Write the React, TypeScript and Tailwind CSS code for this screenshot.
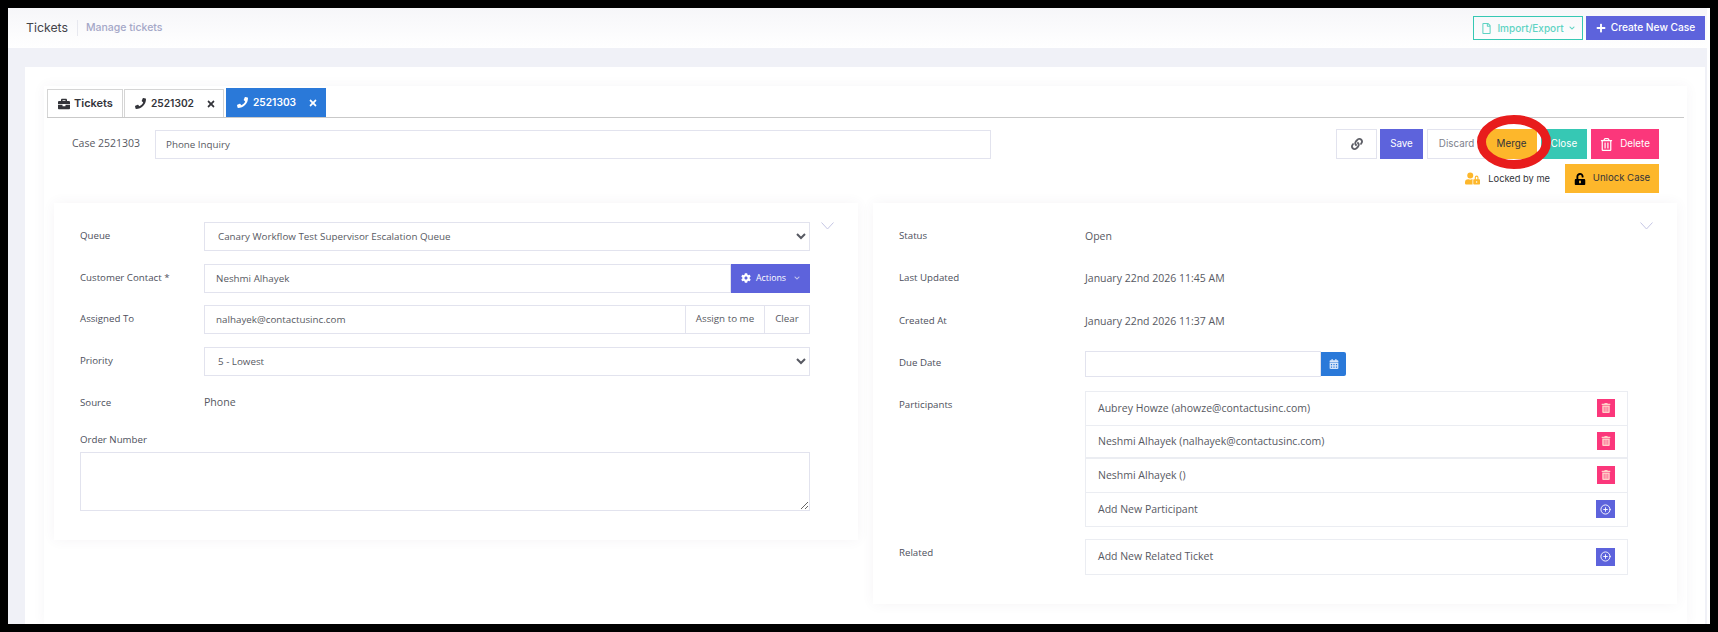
import React from 'react';
import { FaBriefcase, FaPhone, FaTimes, FaLink, FaRegTrashAlt, FaUserLock, FaUnlockAlt, FaCog, FaRegFile, FaPlus, FaCalendarAlt, FaChevronDown, FaTrashAlt } from 'react-icons/fa';
import { FiPlusCircle } from 'react-icons/fi';

const poppins = 'font-["Inter","Liberation_Sans",sans-serif]';

const FieldLabel: React.FC<{ children: React.ReactNode }> = ({ children }) => (
  <span className="text-[9.7px] text-[#4d4f5c]">{children}</span>
);

const Collapse = () => (
  <svg className="absolute right-[24px] top-[19px] w-[13px] h-[8px] text-[#c5c6e4]" viewBox="0 0 13 8" fill="none" stroke="currentColor" strokeWidth="1">
    <path d="M0.5 0.5 L6.5 7 L12.5 0.5" />
  </svg>
);

const ListRow: React.FC<{ text: string; add?: boolean; thick?: boolean }> = ({ text, add, thick }) => (
  <div className={`flex items-center justify-between h-[33.5px] pl-[12px] pr-[12px] text-[10.5px] text-[#575962] ${thick ? 'border-b-2' : 'border-b'} border-[#ebedf2] last:border-b-0`}>
    <span className="pt-px">{text}</span>
    {add ? (
      <button className="flex items-center justify-center w-[19px] h-[18px] bg-[#5d63dc] text-white">
        <FiPlusCircle size={11} />
      </button>
    ) : (
      <button className="flex items-center justify-center w-[18px] h-[18px] bg-[#fb377b] text-[#ffd0c8]">
        <FaTrashAlt size={10} />
      </button>
    )}
  </div>
);

const InfoRow: React.FC<{ label: string; value: string }> = ({ label, value }) => (
  <div className="grid grid-cols-[186px_1fr] items-center h-[42.5px]">
    <FieldLabel>{label}</FieldLabel>
    <span className="pt-px text-[10.5px] text-[#575962]">{value}</span>
  </div>
);

const inputClass = 'h-[29px] bg-white border border-[#e2e3ee] text-[9.8px] text-[#575962] outline-none';

export default function App() {
  return (
    <div className="h-[632px] w-[1718px] bg-black p-2 overflow-hidden font-['Open_Sans',sans-serif]">
      <div className="relative h-[616px] bg-white pr-[3px] overflow-hidden">
        {/* Subheader */}
        <div className="flex items-center justify-between h-10 pl-[18px] pr-[2px] bg-gradient-to-b from-[#f6f6f9] to-white">
          <div className={`flex items-center ${poppins}`}>
            <span className="text-[12.3px] text-[#434349]">Tickets</span>
            <span className="w-px h-4 bg-[#e7e8ef] mx-[9px]" />
            <span className="-ml-px text-[10.5px] font-medium text-[#a5a8c8]">Manage tickets</span>
          </div>
          <div className={`flex items-center gap-[3px] font-medium ${poppins}`}>
            <button className="flex items-center justify-center gap-[5px] w-[110px] h-6 border border-[#36c8b4] text-[10px] text-[#5fd3c3]">
              <FaRegFile size={11} />
              <span>Import/Export</span>
              <FaChevronDown size={6} />
            </button>
            <button className="flex items-center justify-center gap-[5px] w-[119px] h-6 bg-[#5d63dc] text-[10.2px] text-white">
              <FaPlus size={10} />
              <span>Create New Case</span>
            </button>
          </div>
        </div>

        {/* Page */}
        <div className="h-[576px] bg-[#f0f1f7] pt-[19px] pl-[17px] pr-[2px]">
          <div className="h-full bg-white pt-[19px] pl-[19px] pr-[18px]">
            <div className="h-full px-[3px] pt-[3px] shadow-[0_0_12px_rgba(82,63,105,0.05)]">
              {/* Tabs */}
              <div className={`flex items-end h-[29px] gap-px border-b border-[#c9c9c9] font-semibold ${poppins}`}>
                <div className="flex items-center gap-[4px] w-[76px] h-[28px] pl-[10px] border border-b-0 border-[#d5d5d5] text-[11px] text-[#33343a]">
                  <FaBriefcase size={12} />
                  <span>Tickets</span>
                </div>
                <div className="flex items-center gap-[5px] w-[100px] h-[28px] pl-[10px] border border-b-0 border-[#d5d5d5] text-[10.2px] text-[#33343a]">
                  <FaPhone size={11} />
                  <span>2521302</span>
                  <FaTimes size={10} className="ml-[7px]" />
                </div>
                <div className="flex items-center gap-[5px] w-[100px] h-[29px] ml-px pl-[11px] bg-[#2a79d9] text-[10.2px] text-white">
                  <FaPhone size={11} />
                  <span>2521303</span>
                  <FaTimes size={10} className="ml-[7px]" />
                </div>
              </div>

              {/* Case header */}
              <div className="flex items-start justify-between pl-[25px] pr-[25px] pt-[11px]">
                <div className="flex items-center h-[30px]">
                  <span className="w-[83px] text-[10.5px] text-[#575962]">Case 2521303</span>
                  <input readOnly value="Phone Inquiry" className={`w-[836px] ${inputClass} pl-[10px]`} />
                </div>
                <div className="flex flex-col items-end gap-[5px]">
                  <div className={`flex items-center h-[30px] text-[9.8px] ${poppins}`}>
                    <button className="flex items-center justify-center w-[41px] h-[30px] border border-[#e2e3ee] text-[#5f6068]">
                      <FaLink size={12} />
                    </button>
                    <button className="w-[43px] h-[30px] ml-[3px] bg-[#5d63dc] text-white">Save</button>
                    <button className="w-[59px] h-[30px] ml-[4px] border border-[#e2e3ee] text-[#7d7f8c]">Discard</button>
                    <button className="w-[51px] h-[30px] bg-[#fdb72b] text-[#33343a]">Merge</button>
                    <button className="w-[46px] h-[30px] ml-[4px] bg-[#36c8b4] text-white">Close</button>
                    <button className="flex items-center justify-center gap-[7px] w-[68px] h-[30px] ml-[4px] bg-[#fb377b] text-white">
                      <FaRegTrashAlt size={13} />
                      <span>Delete</span>
                    </button>
                  </div>
                  <div className={`flex items-center h-[29px] ${poppins}`}>
                    <FaUserLock size={15} className="text-[#fdb72b]" />
                    <span className="ml-2 mr-[15px] text-[9.3px] text-[#33343a]">Locked by me</span>
                    <button className="flex items-center justify-center gap-[7px] w-[94px] h-[29px] bg-[#fdb72b] text-[9.6px] text-[#33343a]">
                      <FaUnlockAlt size={12} className="text-black" />
                      <span>Unlock Case</span>
                    </button>
                  </div>
                </div>
              </div>

              {/* Cards */}
              <div className="flex items-start gap-[15px] px-[7px] mt-[10px]">
                <div className="relative w-[804px] h-[337px] pt-[19px] pl-[26px] bg-white shadow-[0_0_12px_rgba(82,63,105,0.06)]">
                  <Collapse />
                  <div className="w-[730px]">
                    <div className="grid grid-cols-[124px_606px] items-center h-[29px] mb-[12.6px]">
                      <FieldLabel>Queue</FieldLabel>
                      <select defaultValue="q" className={`${inputClass} w-full pl-[9px]`}>
                        <option value="q">Canary Workflow Test Supervisor Escalation Queue</option>
                      </select>
                    </div>
                    <div className="grid grid-cols-[124px_606px] items-center h-[29px] mb-[12.6px]">
                      <FieldLabel>Customer Contact *</FieldLabel>
                      <div className="flex">
                        <input readOnly value="Neshmi Alhayek" className={`flex-1 min-w-0 ${inputClass} pl-[11px]`} />
                        <button className="flex items-center gap-[5px] w-[79px] h-[29px] pl-[10px] bg-[#5d63dc] text-white text-[8.8px]">
                          <FaCog size={10} />
                          <span>Actions</span>
                          <FaChevronDown size={6} className="ml-[3px] text-[#c5c6f0]" />
                        </button>
                      </div>
                    </div>
                    <div className="grid grid-cols-[124px_606px] items-center h-[29px] mb-[12.6px]">
                      <FieldLabel>Assigned To</FieldLabel>
                      <div className="flex">
                        <input readOnly value="nalhayek@contactusinc.com" className={`flex-1 min-w-0 ${inputClass} pl-[11px]`} />
                        <button className="w-[79px] h-[29px] border border-l-0 border-[#e2e3ee] text-[9.8px] text-[#575962]">Assign to me</button>
                        <button className="w-[45px] h-[29px] border border-l-0 border-[#e2e3ee] text-[9.8px] text-[#575962]">Clear</button>
                      </div>
                    </div>
                    <div className="grid grid-cols-[124px_606px] items-center h-[29px] mb-[14px]">
                      <FieldLabel>Priority</FieldLabel>
                      <select defaultValue="5" className={`${inputClass} w-full pl-[9px]`}>
                        <option value="5">5 - Lowest</option>
                      </select>
                    </div>
                    <div className="grid grid-cols-[124px_606px] items-center h-[26px]">
                      <FieldLabel>Source</FieldLabel>
                      <span className="text-[10.6px] text-[#575962]">Phone</span>
                    </div>
                  </div>
                  <div className="w-[730px] mt-[16px]">
                    <div className="text-[9.7px] leading-[15px] text-[#4d4f5c] mb-[5px]">Order Number</div>
                    <textarea className="block w-full h-[59px] border border-[#e2e3ee] outline-none" />
                  </div>
                </div>

                <div className="relative w-[804px] h-[401px] pt-[12px] pl-[26px] bg-white shadow-[0_0_12px_rgba(82,63,105,0.06)]">
                  <Collapse />
                  <InfoRow label="Status" value="Open" />
                  <InfoRow label="Last Updated" value="January 22nd 2026 11:45 AM" />
                  <InfoRow label="Created At" value="January 22nd 2026 11:37 AM" />
                  <div className="grid grid-cols-[186px_1fr] items-center h-[42.5px]">
                    <FieldLabel>Due Date</FieldLabel>
                    <div className="flex items-center">
                      <input readOnly className="w-[236px] h-[26px] border border-[#e2e3ee] outline-none" />
                      <button className="flex items-center justify-center w-[25px] h-[24px] bg-[#2a79d9] text-[#d8e6fa] rounded-r-[2px]">
                        <FaCalendarAlt size={10} />
                      </button>
                    </div>
                  </div>
                  <div className="grid grid-cols-[186px_543px] mt-[6px]">
                    <span className="text-[9.7px] leading-[27px] text-[#4d4f5c]">Participants</span>
                    <div className="border border-[#ebedf2]">
                      <ListRow text="Aubrey Howze (ahowze@contactusinc.com)" />
                      <ListRow text="Neshmi Alhayek (nalhayek@contactusinc.com)" thick />
                      <ListRow text="Neshmi Alhayek ()" />
                      <ListRow text="Add New Participant" add />
                    </div>
                  </div>
                  <div className="grid grid-cols-[186px_543px] mt-3">
                    <span className="text-[9.7px] leading-[27px] text-[#4d4f5c]">Related</span>
                    <div className="border border-[#ebedf2]">
                      <ListRow text="Add New Related Ticket" add />
                    </div>
                  </div>
                </div>
              </div>
            </div>
          </div>
        </div>

        {/* Red annotation drawn over the Merge button */}
        <svg className="absolute left-[1467px] top-[105px] w-[78px] h-[58px] pointer-events-none" viewBox="0 0 78 58" fill="none">
          <ellipse cx="39" cy="29" rx="32.5" ry="22.5" stroke="#e81c1c" strokeWidth="9" />
        </svg>
      </div>
    </div>
  );
}
